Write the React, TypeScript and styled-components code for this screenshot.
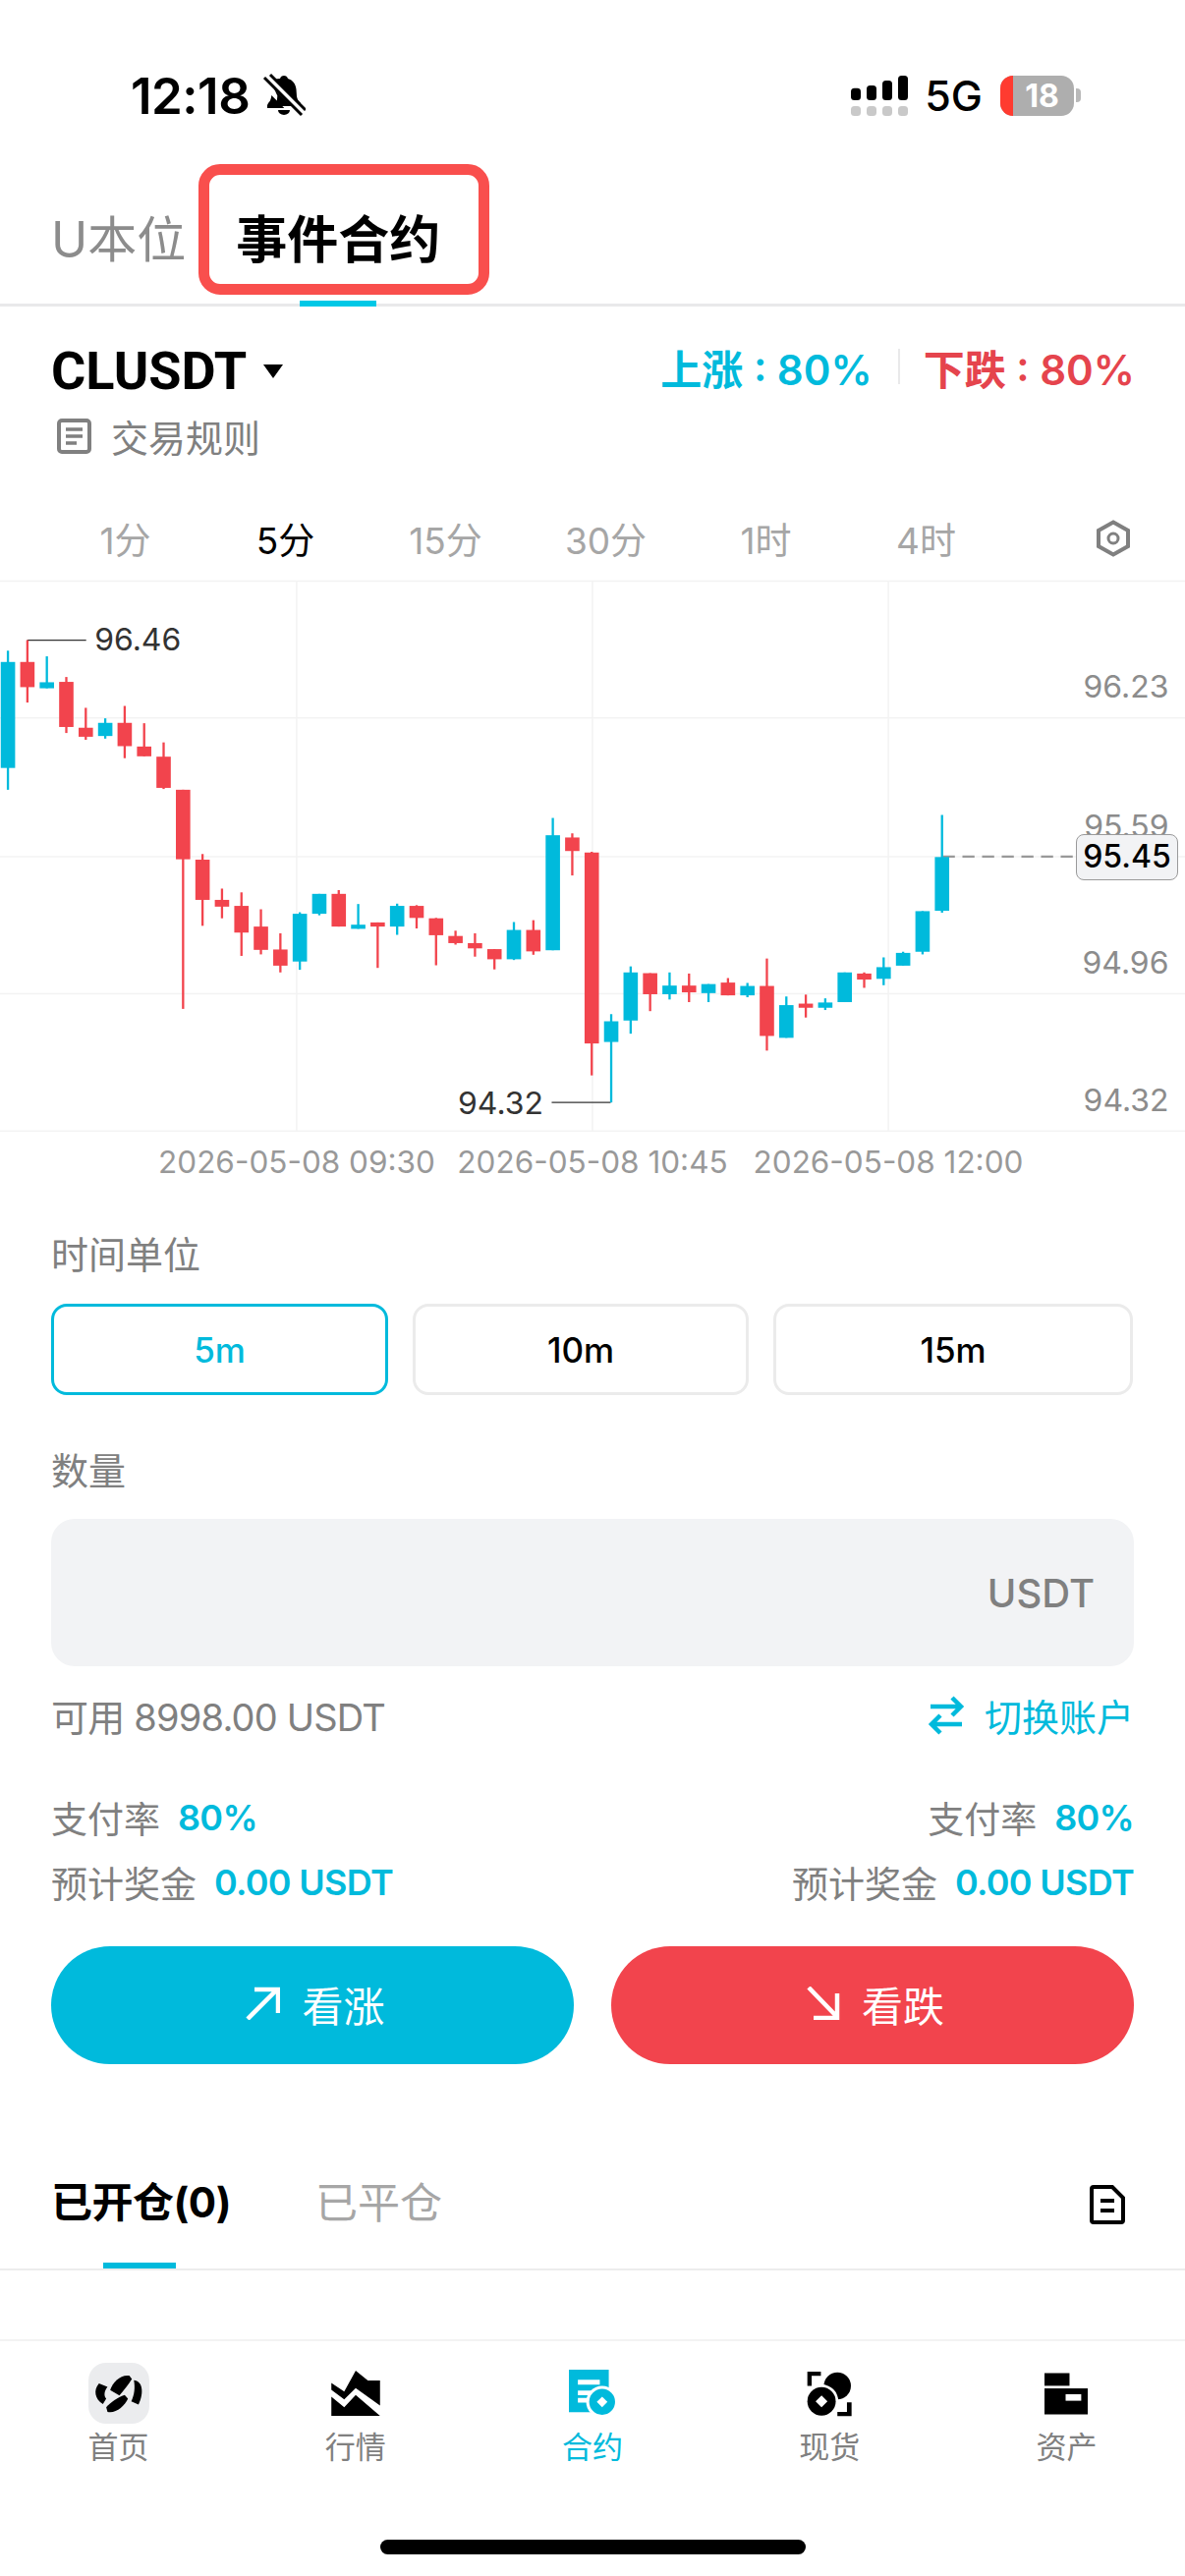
import React from 'react'
import styled, { createGlobalStyle } from 'styled-components'

const CYAN = '#00badc'
const RED = '#f2444d'
const LABEL = '#808080'
const MUTED = '#a6a6a6'

const GlobalStyle = createGlobalStyle`
  html, body {
    margin: 0;
    padding: 0;
    background: #fff;
    font-family: Inter, "Noto Sans CJK SC", sans-serif;
    color: #000;
  }
  * { box-sizing: border-box; }
`

const Page = styled.div`
  width: 1206px;
  height: 2622px;
  overflow: hidden;
  background: #fff;
`

const StatusBar = styled.div`
  height: 160px;
  padding: 34px 106px 0 133px;
  display: flex;
  align-items: center;
  justify-content: space-between;
`

const Clock = styled.div`
  display: flex;
  align-items: center;
  gap: 13px;
  font-size: 51px;
  font-weight: 600;
  letter-spacing: -0.5px;
`

const StatusRight = styled.div`
  display: flex;
  align-items: center;
`

const NetworkLabel = styled.span`
  margin: 0 18px 0 17px;
  font-size: 43px;
  font-weight: 500;
`

const Battery = styled.div`
  position: relative;
  width: 75px;
  height: 41px;
  border-radius: 13px;
  overflow: hidden;
  background: #aeaeae;
  color: #fff;
  font-size: 32px;
  font-weight: 700;
  line-height: 41px;
  text-align: center;
  padding-left: 10px;
  &::before {
    content: '';
    position: absolute;
    left: 0;
    top: 0;
    bottom: 0;
    width: 13px;
    background: #ff3b30;
  }
`

const BatteryNub = styled.div`
  width: 5px;
  height: 14px;
  margin-left: 2px;
  border-radius: 0 4px 4px 0;
  background: #b9b9b9;
`

const TabBar = styled.div`
  height: 152px;
  padding: 0 52px;
  display: flex;
  gap: 51px;
  border-bottom: 3px solid #e9e9ea;
`

const TopTab = styled.div<{ $active?: boolean }>`
  position: relative;
  display: flex;
  align-items: center;
  padding-top: 11px;
  font-size: ${(p) => (p.$active ? 52 : 50)}px;
  font-weight: ${(p) => (p.$active ? 700 : 400)};
  color: ${(p) => (p.$active ? '#000' : '#8c8c8c')};
  ${(p) =>
    p.$active &&
    `&::after {
      content: '';
      position: absolute;
      left: 65px;
      width: 78px;
      bottom: -3px;
      height: 6px;
      background: #00c8e6;
    }`}
`

const HighlightBox = styled.div`
  position: absolute;
  left: -38px;
  right: -50px;
  top: 7px;
  bottom: 9px;
  border: 11px solid #f94f4d;
  border-radius: 22px;
`

const SymbolRow = styled.div`
  height: 90px;
  margin-top: 20px;
  padding: 0 51px 0 52px;
  display: flex;
  align-items: center;
  justify-content: space-between;
`

const SymbolName = styled.div`
  display: flex;
  align-items: center;
  gap: 17px;
  font-family: Roboto, sans-serif;
  font-size: 54px;
  font-weight: 700;
`

const Caret = styled.div`
  width: 0;
  height: 0;
  margin-top: 2px;
  border-left: 10px solid transparent;
  border-right: 10px solid transparent;
  border-top: 14px solid #000;
`

const Odds = styled.div`
  display: flex;
  align-items: center;
  padding-bottom: 8px;
  font-size: 42px;
  font-weight: 600;
`

const OddsValue = styled.span<{ $color: string }>`
  color: ${(p) => p.$color};
`

const OddsDivider = styled.div`
  width: 2px;
  height: 36px;
  margin: 0 24px 0 26px;
  background: #e9e9ea;
`

const RulesRow = styled.div`
  height: 46px;
  padding: 0 58px 3px;
  display: flex;
  align-items: center;
  gap: 20px;
  font-size: 38px;
  color: ${LABEL};
`

const IntervalRow = styled.div`
  height: 50px;
  margin-top: 57px;
  padding: 0 55px 5px 46px;
  display: flex;
  align-items: center;
  font-size: 37px;
  color: ${MUTED};
`

const IntervalItem = styled.div<{ $active?: boolean }>`
  width: 163px;
  text-align: center;
  color: ${(p) => (p.$active ? '#000' : MUTED)};
`

const IntervalSettings = styled.div`
  margin-left: auto;
  display: flex;
`

const ChartBox = styled.div`
  position: relative;
  height: 562px;
  margin-top: 15px;
`

const ChartSvg = styled.svg`
  display: block;
`

const PriceTag = styled.div`
  position: absolute;
  left: 1095px;
  top: 259px;
  width: 104px;
  height: 47px;
  border: 1.5px solid #9a9a9a;
  border-radius: 8px;
  background: #f2f3f5;
  font-size: 32px;
  font-weight: 500;
  line-height: 44px;
  text-align: center;
`

const DateAxis = styled.div`
  height: 60px;
  display: flex;
  align-items: center;
  justify-content: center;
  font-size: 31.5px;
  color: #999;
`

const DateLabel = styled.div`
  width: 301px;
  text-align: center;
  white-space: nowrap;
`

const Form = styled.div`
  padding: 0 52px;
`

const FieldLabel = styled.div<{ $top: number }>`
  height: 50px;
  margin-top: ${(p) => p.$top}px;
  padding-bottom: 5px;
  display: flex;
  align-items: center;
  font-size: 38px;
  color: ${LABEL};
`

const DurationRow = styled.div`
  margin-top: 25px;
  display: grid;
  grid-template-columns: 343px 342px 366px;
  gap: 25px;
`

const DurationButton = styled.div<{ $active?: boolean }>`
  height: 93px;
  border-radius: 16px;
  border: ${(p) => (p.$active ? `3px solid ${CYAN}` : '3px solid #ebebeb')};
  color: ${(p) => (p.$active ? CYAN : '#000')};
  display: flex;
  align-items: center;
  justify-content: center;
  font-size: 35px;
  font-weight: 500;
`

const AmountInput = styled.div`
  height: 150px;
  margin-top: 24px;
  padding-right: 40px;
  border-radius: 24px;
  background: #f2f3f5;
  display: flex;
  align-items: center;
  justify-content: flex-end;
  font-size: 40px;
  font-weight: 500;
  color: ${LABEL};
`

const BalanceRow = styled.div`
  height: 50px;
  margin-top: 27px;
  padding-bottom: 5px;
  display: flex;
  align-items: center;
  justify-content: space-between;
  font-size: 38px;
  color: ${LABEL};
`

const BalanceText = styled.span`
  letter-spacing: -0.8px;
`

const SwitchAccount = styled.div`
  display: flex;
  align-items: center;
  gap: 20px;
  color: ${CYAN};
`

const PayoutRow = styled.div<{ $top: number }>`
  height: 50px;
  margin-top: ${(p) => p.$top}px;
  display: flex;
  justify-content: space-between;
`

const PayoutItem = styled.div`
  display: flex;
  align-items: center;
  gap: 18px;
  font-size: 37px;
  color: ${LABEL};
`

const PayoutValue = styled.span`
  color: ${CYAN};
  font-size: 36px;
  font-weight: 600;
  letter-spacing: -0.7px;
`

const ActionRow = styled.div`
  margin-top: 40px;
  display: grid;
  grid-template-columns: 532px 532px;
  justify-content: space-between;
`

const ActionButton = styled.div<{ $color: string }>`
  height: 120px;
  padding: 0 0 4px 6px;
  border-radius: 60px;
  background: ${(p) => p.$color};
  color: #fff;
  display: flex;
  align-items: center;
  justify-content: center;
  gap: 22px;
  font-size: 42px;
`

const PositionTabs = styled.div`
  height: 131px;
  margin-top: 79px;
  padding: 0 52px;
  display: flex;
  gap: 86px;
  border-bottom: 2px solid #ececec;
`

const PositionTab = styled.div<{ $active?: boolean }>`
  position: relative;
  padding-top: 37px;
  line-height: 50px;
  font-size: ${(p) => (p.$active ? 42 : 43)}px;
  font-weight: ${(p) => (p.$active ? 700 : 400)};
  letter-spacing: ${(p) => (p.$active ? '-0.5px' : '0')};
  color: ${(p) => (p.$active ? '#000' : MUTED)};
  ${(p) =>
    p.$active &&
    `&::after {
      content: '';
      position: absolute;
      left: 53px;
      width: 74px;
      bottom: 0;
      height: 6px;
      background: ${CYAN};
    }`}
`

const HistoryIcon = styled.div`
  margin-left: auto;
  padding: 44px 9px 0 0;
`

const NavBar = styled.div`
  margin-top: 70px;
  padding-top: 22px;
  border-top: 2px solid #f3f3f3;
  display: grid;
  grid-template-columns: repeat(5, 1fr);
`

const NavItem = styled.div<{ $active?: boolean }>`
  display: flex;
  flex-direction: column;
  align-items: center;
  font-size: 31px;
  color: ${(p) => (p.$active ? CYAN : LABEL)};
`

const NavIconBox = styled.div<{ $tile?: boolean }>`
  width: 62px;
  height: 62px;
  border-radius: 18px;
  background: ${(p) => (p.$tile ? '#ebecee' : 'transparent')};
  display: flex;
  align-items: center;
  justify-content: center;
`

const NavLabel = styled.div`
  height: 40px;
  margin-top: 4px;
  line-height: 40px;
`

const HomeIndicator = styled.div`
  width: 433px;
  height: 15px;
  margin: 74px auto 0;
  border-radius: 8px;
  background: #000;
`

// [up, wick top, body top, body bottom, wick bottom], measured in chart units
const candles: [number, number, number, number, number][] = [
  [1, 215, 245, 527, 585],
  [0, 187, 245, 312, 353],
  [1, 230, 299, 315, 315],
  [0, 285, 298, 418, 434],
  [0, 367, 420, 444, 452],
  [1, 395, 407, 442, 449],
  [0, 362, 407, 469, 501],
  [0, 408, 470, 496, 496],
  [0, 459, 497, 580, 583],
  [0, 585, 585, 770, 1168],
  [0, 756, 771, 878, 947],
  [0, 848, 878, 896, 927],
  [0, 858, 894, 965, 1027],
  [0, 903, 949, 1011, 1023],
  [0, 967, 1010, 1053, 1071],
  [1, 911, 915, 1042, 1064],
  [1, 862, 862, 915, 919],
  [0, 852, 862, 949, 949],
  [1, 889, 944, 955, 955],
  [0, 938, 938, 949, 1059],
  [1, 888, 894, 949, 971],
  [0, 892, 894, 926, 954],
  [0, 926, 927, 972, 1052],
  [0, 960, 974, 993, 997],
  [0, 967, 993, 1007, 1029],
  [0, 1009, 1009, 1036, 1063],
  [1, 937, 958, 1036, 1038],
  [0, 932, 958, 1015, 1024],
  [1, 660, 706, 1012, 1012],
  [0, 701, 712, 748, 813],
  [0, 750, 752, 1260, 1345],
  [1, 1182, 1201, 1256, 1417],
  [1, 1055, 1071, 1199, 1234],
  [0, 1073, 1073, 1129, 1174],
  [1, 1071, 1106, 1129, 1143],
  [0, 1074, 1106, 1124, 1150],
  [1, 1102, 1102, 1126, 1150],
  [0, 1086, 1098, 1132, 1132],
  [1, 1099, 1107, 1132, 1137],
  [0, 1034, 1107, 1240, 1279],
  [1, 1135, 1158, 1245, 1245],
  [0, 1130, 1154, 1165, 1191],
  [1, 1140, 1151, 1165, 1171],
  [1, 1071, 1071, 1150, 1150],
  [0, 1071, 1074, 1090, 1112],
  [1, 1031, 1057, 1088, 1105],
  [1, 1016, 1019, 1053, 1053],
  [1, 908, 908, 1016, 1023],
  [1, 652, 764, 907, 912],
]

const axisPrices = [
  { label: '96.23', y: 310 },
  { label: '95.59', y: 680 },
  { label: '94.96', y: 1045 },
  { label: '94.32', y: 1410 },
]

const gridStyle = { stroke: '#f3f3f3', strokeWidth: 4 }
const chartFont = { fontFamily: 'Inter, sans-serif', fontSize: 83 }

function CandleChart() {
  return (
    <ChartSvg width="1206" height="562" viewBox="0 26 3136 1469" preserveAspectRatio="none">
      {[30, 394, 763, 1128, 1493].map((y) => (
        <line key={y} x1="0" x2="3136" y1={y} y2={y} {...gridStyle} />
      ))}
      {[785, 1568, 2351].map((x) => (
        <line key={x} x1={x} x2={x} y1="30" y2="1493" {...gridStyle} />
      ))}
      <line x1="72" x2="228" y1="187" y2="187" stroke="#333" strokeWidth="3" />
      <line x1="1460" x2="1616" y1="1417" y2="1417" stroke="#333" strokeWidth="3" />
      <line x1="2495" x2="2848" y1="763" y2="763" stroke="#999" strokeWidth="6" strokeDasharray="32 20" />
      {candles.map(([up, wickTop, top, bottom, wickBottom], i) => {
        const cx = 21 + i * 51.5
        const fill = up ? CYAN : RED
        return (
          <g key={i} fill={fill}>
            <rect x={cx - 3} y={wickTop} width="6" height={wickBottom - wickTop} />
            <rect x={cx - 19} y={top} width="38" height={bottom - top} />
          </g>
        )
      })}
      <text x="250" y="215" fill="#333" {...chartFont}>96.46</text>
      <text x="1212" y="1447" fill="#333" {...chartFont}>94.32</text>
      {axisPrices.map((p) => (
        <text key={p.label} x="3093" y={p.y + 30} textAnchor="end" fill="#8c8c8c" {...chartFont}>
          {p.label}
        </text>
      ))}
    </ChartSvg>
  )
}

function BellSlash() {
  return (
    <svg width="44" height="46" viewBox="0 0 44 44">
      <path
        d="M22 2c2 0 3.500 1.300 4 3 5 1.500 8 5.500 8.500 11l.5 7c.3 3 2 5 4 7v3H12c1.500-2 2.700-4.500 3-7l.3-3.500L9 9C11 6 14 5 18 5c.5-1.700 2-3 4-3z"
        fill="#000"
      />
      <path d="M6 30c1.500-1.500 2.500-3.500 3-6l.3-2 13 13H5v-3z" fill="#000" />
      <path d="M16 37h12a6 5 0 0 1-12 0z" fill="#000" />
      <path d="M3 2l39 38" stroke="#fff" strokeWidth="7" />
      <path d="M2 4l38 38" stroke="#000" strokeWidth="3" />
      <path d="M8 1l36 36" stroke="#000" strokeWidth="3" />
    </svg>
  )
}

function SignalBars() {
  const bars = [
    { x: 0, top: 12.7 },
    { x: 16, top: 10 },
    { x: 32, top: 5 },
    { x: 48, top: 0 },
  ]
  return (
    <svg width="58" height="41" viewBox="0 0 58 41">
      {bars.map((b) => (
        <g key={b.x}>
          <rect x={b.x} y={b.top} width="10" height={25 - b.top} rx="3.500" fill="#000" />
          <rect x={b.x} y="31" width="10" height="10" rx="3.500" fill="#c9c9c9" />
        </g>
      ))}
    </svg>
  )
}

function RulesIcon() {
  return (
    <svg width="35" height="36" viewBox="0 0 35 36" fill="none" stroke={LABEL}>
      <rect x="2" y="2" width="31" height="32" rx="3" strokeWidth="4" />
      <path d="M9 11h17M9 18h17M9 25h11" strokeWidth="3.500" />
    </svg>
  )
}

function SettingsIcon() {
  return (
    <svg width="36" height="38" viewBox="0 0 36 38" fill="none" stroke="#808080">
      <path d="M18 2.500l15 8.500v16l-15 8.500-15-8.500V11z" strokeWidth="4" />
      <circle cx="18" cy="19" r="5" strokeWidth="3" />
    </svg>
  )
}

function SwapIcon() {
  return (
    <svg width="38" height="40" viewBox="0 0 38 40" fill="none" stroke={CYAN} strokeWidth="4.500">
      <path d="M3 11h31M25 2l9 9-9 9" />
      <path d="M35 29H4M13 20l-9 9 9 9" />
    </svg>
  )
}

function ArrowUpRight() {
  return (
    <svg width="35" height="34" viewBox="0 0 35 34" fill="none" stroke="#fff" strokeWidth="4.500">
      <path d="M2 33L32 3M9 3h24v24" />
    </svg>
  )
}

function ArrowDownRight() {
  return (
    <svg width="34" height="34" viewBox="0 0 34 34" fill="none" stroke="#fff" strokeWidth="4.500">
      <path d="M2 1l29 30M31 7v25H7" />
    </svg>
  )
}

function HistoryDoc() {
  return (
    <svg width="36" height="40" viewBox="0 0 36 40" fill="none" stroke="#000">
      <path d="M2 4a2 2 0 0 1 2-2h19l11 11v23a2 2 0 0 1-2 2H4a2 2 0 0 1-2-2z" strokeWidth="4" />
      <path d="M11 16h14M11 26h14" strokeWidth="4" />
    </svg>
  )
}

function HomeLogo() {
  return (
    <svg width="62" height="62" viewBox="30 25 185 185" fill="#000">
      <path d="M62 88l26 10c-10 12-12 27-4 36l-10 16c-24-13-30-42-12-62z" />
      <path d="M96 108c8-25 32-48 58-44l8 10c-10 16-22 31-38 50z" />
      <path d="M168 78c26 2 32 37 14 74l-22-10c10-20 12-42 8-64z" />
      <path d="M84 160c14-15 34-30 56-37l10 11c-10 23-38 46-62 40z" />
    </svg>
  )
}

function MarketIcon() {
  return (
    <svg width="50" height="46" viewBox="775 50 140 130" fill="#000">
      <path d="M775 85l37 25 33-60 35 28h35v72l-70-50-33 33-37-28z" />
      <path d="M775 125l37 30 33-35 70 60H775z" />
    </svg>
  )
}

function ContractIcon() {
  return (
    <svg width="48" height="48" viewBox="65 55 142 142">
      <rect x="65" y="55" width="120" height="128" fill={CYAN} />
      <path d="M92 85h66v15H92zM92 118h50v14H92zM92 140h30v14H92z" fill="#fff" />
      <circle cx="165" cy="152" r="48" fill="#fff" />
      <circle cx="165" cy="152" r="39" fill={CYAN} />
      <path d="M165 136l16 16-16 16-16-16z" fill="#fff" />
    </svg>
  )
}

function SpotIcon() {
  return (
    <svg width="47" height="47" viewBox="785 50 140 138">
      <path d="M787 95V52h41v13h-28v30z" fill="#000" />
      <path d="M921 145v42h-43v-13h29v-29z" fill="#000" />
      <circle cx="878" cy="95" r="41" fill="#000" />
      <circle cx="830" cy="142" r="51" fill="#fff" />
      <circle cx="830" cy="142" r="43" fill="#000" />
      <path d="M830 124l18 18-18 18-18-18z" fill="#fff" />
    </svg>
  )
}

function AssetIcon() {
  return (
    <svg width="44" height="43" viewBox="70 53 133 127">
      <rect x="70" y="53" width="77" height="39" fill="#000" />
      <rect x="70" y="100" width="133" height="80" fill="#000" />
      <rect x="135" y="118" width="48" height="20" fill="#fff" />
    </svg>
  )
}

const intervals = ['1分', '5分', '15分', '30分', '1时', '4时']
const dates = ['2026-05-08 09:30', '2026-05-08 10:45', '2026-05-08 12:00']
const durations = ['5m', '10m', '15m']
const navItems = [
  { label: '首页', icon: <HomeLogo />, tile: true },
  { label: '行情', icon: <MarketIcon /> },
  { label: '合约', icon: <ContractIcon />, active: true },
  { label: '现货', icon: <SpotIcon /> },
  { label: '资产', icon: <AssetIcon /> },
]

export default function App() {
  return (
    <Page>
      <GlobalStyle />
      <StatusBar>
        <Clock>
          12:18
          <BellSlash />
        </Clock>
        <StatusRight>
          <SignalBars />
          <NetworkLabel>5G</NetworkLabel>
          <Battery>18</Battery>
          <BatteryNub />
        </StatusRight>
      </StatusBar>

      <TabBar>
        <TopTab>U本位</TopTab>
        <TopTab $active>
          事件合约
          <HighlightBox />
        </TopTab>
      </TabBar>

      <SymbolRow>
        <SymbolName>
          CLUSDT
          <Caret />
        </SymbolName>
        <Odds>
          <OddsValue $color={CYAN}>上涨 : 80%</OddsValue>
          <OddsDivider />
          <OddsValue $color="#e5444d">下跌 : 80%</OddsValue>
        </Odds>
      </SymbolRow>
      <RulesRow>
        <RulesIcon />
        交易规则
      </RulesRow>

      <IntervalRow>
        {intervals.map((item) => (
          <IntervalItem key={item} $active={item === '5分'}>
            {item}
          </IntervalItem>
        ))}
        <IntervalSettings>
          <SettingsIcon />
        </IntervalSettings>
      </IntervalRow>

      <ChartBox>
        <CandleChart />
        <PriceTag>95.45</PriceTag>
      </ChartBox>
      <DateAxis>
        {dates.map((d) => (
          <DateLabel key={d}>{d}</DateLabel>
        ))}
      </DateAxis>

      <Form>
        <FieldLabel $top={40}>时间单位</FieldLabel>
        <DurationRow>
          {durations.map((d) => (
            <DurationButton key={d} $active={d === '5m'}>
              {d}
            </DurationButton>
          ))}
        </DurationRow>
        <FieldLabel $top={52}>数量</FieldLabel>
        <AmountInput>USDT</AmountInput>
        <BalanceRow>
          <BalanceText>可用 8998.00 USDT</BalanceText>
          <SwitchAccount>
            <SwapIcon />
            切换账户
          </SwitchAccount>
        </BalanceRow>
        <PayoutRow $top={52}>
          <PayoutItem>
            支付率 <PayoutValue>80%</PayoutValue>
          </PayoutItem>
          <PayoutItem>
            支付率 <PayoutValue>80%</PayoutValue>
          </PayoutItem>
        </PayoutRow>
        <PayoutRow $top={16}>
          <PayoutItem>
            预计奖金 <PayoutValue>0.00 USDT</PayoutValue>
          </PayoutItem>
          <PayoutItem>
            预计奖金 <PayoutValue>0.00 USDT</PayoutValue>
          </PayoutItem>
        </PayoutRow>
        <ActionRow>
          <ActionButton $color={CYAN}>
            <ArrowUpRight />
            看涨
          </ActionButton>
          <ActionButton $color={RED}>
            <ArrowDownRight />
            看跌
          </ActionButton>
        </ActionRow>
      </Form>

      <PositionTabs>
        <PositionTab $active>已开仓(0)</PositionTab>
        <PositionTab>已平仓</PositionTab>
        <HistoryIcon>
          <HistoryDoc />
        </HistoryIcon>
      </PositionTabs>

      <NavBar>
        {navItems.map((item) => (
          <NavItem key={item.label} $active={item.active}>
            <NavIconBox $tile={item.tile}>{item.icon}</NavIconBox>
            <NavLabel>{item.label}</NavLabel>
          </NavItem>
        ))}
      </NavBar>
      <HomeIndicator />
    </Page>
  )
}
